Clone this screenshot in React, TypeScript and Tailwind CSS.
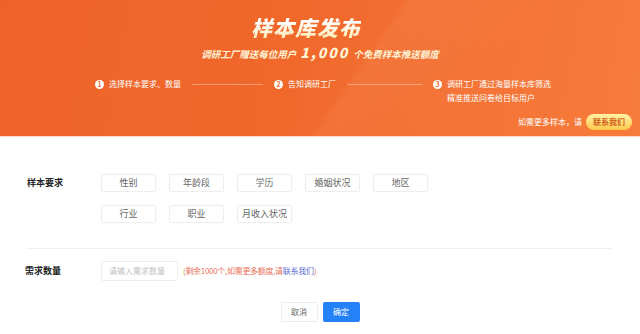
import React from "react";

const tagsRow1 = ["性别", "年龄段", "学历", "婚姻状况", "地区"];
const tagsRow2 = ["行业", "职业", "月收入状况"];

function StepDot({ n }: { n: number }) {
  return (
    <span className="w-[9px] h-[9px] rounded-full bg-white text-[#f06a2c] text-[7px] leading-[9px] font-bold flex items-center justify-center flex-shrink-0">
      {n}
    </span>
  );
}

function Tag({ label }: { label: string }) {
  return (
    <div className="w-[55px] h-[18px] flex items-center justify-center border border-[#eeeeee] rounded-[2px] text-[9px] text-[#666] bg-white shadow-[0_0_2px_rgba(0,0,0,0.04)]">
      {label}
    </div>
  );
}

export default function App() {
  return (
    <div
      className="w-[640px] h-[334px] bg-white overflow-hidden"
      style={{ fontFamily: '"Noto Sans CJK SC", "Noto Sans", sans-serif' }}
    >
      {/* Banner */}
      <div className="relative h-[137px] bg-[linear-gradient(100deg,#ef6328_0%,#f1682b_45%,#f47234_70%,#f67c3b_100%)] overflow-hidden border-b border-[#fbd9c2]">
        <div className="absolute inset-0 bg-[linear-gradient(125deg,transparent_55%,rgba(255,255,255,0.05)_56%,transparent_75%)]" />
        <div className="relative flex flex-col items-center pt-[14px]">
          <div className="text-[21px] leading-[26px] font-black italic tracking-[1px] text-transparent bg-clip-text bg-[linear-gradient(180deg,#ffffff_30%,#ffe9b0_100%)] ml-[-28px]">
            样本库发布
          </div>
          <div className="mt-[5px] text-[9.5px] leading-[14px] font-bold italic text-[#fff3d6] flex items-baseline">
            调研工厂赠送每位用户
            <span className="text-[14px] mx-[4px] tracking-[2px] font-black">1,000</span>
            个免费样本推送额度
          </div>
        </div>

        <div className="relative flex items-start mt-[16px] pl-[95px] text-[8px] leading-[14px] text-white">
          <div className="flex items-center gap-[5px]">
            <StepDot n={1} />
            <span>选择样本要求、数量</span>
          </div>
          <div className="w-[71px] h-px bg-[rgba(255,255,255,0.35)] mt-[7px] ml-[11px] mr-[11px]" />
          <div className="flex items-center gap-[5px]">
            <StepDot n={2} />
            <span>告知调研工厂</span>
          </div>
          <div className="w-[75px] h-px bg-[rgba(255,255,255,0.35)] mt-[7px] ml-[11px] mr-[11px]" />
          <div className="flex items-start gap-[5px]">
            <span className="mt-[2.5px]">
              <StepDot n={3} />
            </span>
            <div className="flex flex-col">
              <span>调研工厂通过海量样本库筛选</span>
              <span>精准推送问卷给目标用户</span>
            </div>
          </div>
        </div>

        <div className="absolute right-[8px] bottom-[6px] flex items-center gap-[4px] text-[8px] text-white">
          <span>如需更多样本，请</span>
          <span className="h-[16px] px-[7px] rounded-full bg-[linear-gradient(180deg,#fff3a8,#ffc94a)] text-[#d0611a] text-[8px] font-bold flex items-center">
            联系我们
          </span>
        </div>
      </div>

      {/* Form */}
      <div className="px-[27px]">
        <div className="flex pt-[37px]">
          <div className="w-[74px] text-[9px] font-bold text-[#222] leading-[18px]">样本要求</div>
          <div className="flex flex-col gap-[13px]">
            <div className="flex gap-[13px]">
              {tagsRow1.map((t) => (
                <Tag key={t} label={t} />
              ))}
            </div>
            <div className="flex gap-[13px]">
              {tagsRow2.map((t) => (
                <Tag key={t} label={t} />
              ))}
            </div>
          </div>
        </div>

        <div className="h-px bg-[#f0f0f0] mt-[25px] mr-[1px]" />

        <div className="flex items-center mt-[12px]">
          <div className="w-[74px] text-[9px] font-bold text-[#222] -ml-[2px] mr-[2px]">需求数量</div>
          <div className="w-[77px] h-[20px] border border-[#eeeeee] rounded-[2px] flex items-center px-[7px] text-[8px] text-[#c0c0c0]">
            请输入需求数量
          </div>
          <div className="ml-[5px] text-[8px] tracking-[-0.3px] text-[#e8735c]">
            (剩余1000个,如需更多额度,请<span className="text-[#5b6fd6]">联系我们</span>)
          </div>
        </div>

        <div className="flex justify-center gap-[5px] mt-[21px]">
          <div className="w-[37px] h-[20px] border border-[#eeeeee] rounded-[2px] flex items-center justify-center text-[8px] text-[#666]">
            取消
          </div>
          <div className="w-[37px] h-[20px] rounded-[2px] bg-[#2581f7] flex items-center justify-center text-[8px] text-white">
            确定
          </div>
        </div>
      </div>
    </div>
  );
}
